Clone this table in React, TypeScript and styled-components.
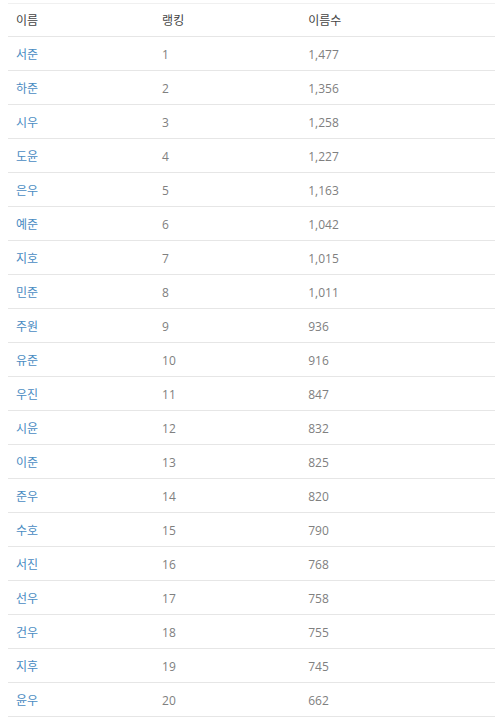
import React from "react";
import styled, { createGlobalStyle } from "styled-components";

const Global = createGlobalStyle`
  html, body { margin: 0; padding: 0; background: #fff; }
  body { font-family: "Open Sans", "Noto Sans CJK KR", sans-serif; }
`;

const Wrap = styled.div`
  padding: 3px 5px 0 8px;
`;

const Table = styled.table`
  width: 100%;
  border-collapse: collapse;
  font-size: 12px;
  line-height: 17px;
  border-top: 1px solid #f0f0f0;
`;

const Th = styled.th<{ $w: string }>`
  width: ${(p) => p.$w};
  text-align: left;
  font-weight: 400;
  color: #444;
  padding: 8px 8px 7px;
  border-bottom: 1px solid #e6e6e6;
`;

const Td = styled.td`
  padding: 9px 8px 7px;
  color: #808080;
  border-bottom: 1px solid #e6e6e6;
`;

const NameLink = styled.a`
  color: #4a8bc2;
  text-decoration: none;
`;

const rows: [string, number, string][] = [
  ["서준", 1, "1,477"],
  ["하준", 2, "1,356"],
  ["시우", 3, "1,258"],
  ["도윤", 4, "1,227"],
  ["은우", 5, "1,163"],
  ["예준", 6, "1,042"],
  ["지호", 7, "1,015"],
  ["민준", 8, "1,011"],
  ["주원", 9, "936"],
  ["유준", 10, "916"],
  ["우진", 11, "847"],
  ["시윤", 12, "832"],
  ["이준", 13, "825"],
  ["준우", 14, "820"],
  ["수호", 15, "790"],
  ["서진", 16, "768"],
  ["선우", 17, "758"],
  ["건우", 18, "755"],
  ["지후", 19, "745"],
  ["윤우", 20, "662"],
];

export default function App() {
  return (
    <Wrap>
      <Global />
      <Table>
        <thead>
          <tr>
            <Th $w="30%">이름</Th>
            <Th $w="30%">랭킹</Th>
            <Th $w="40%">이름수</Th>
          </tr>
        </thead>
        <tbody>
          {rows.map(([n, r, c]) => (
            <tr key={r}>
              <Td>
                <NameLink href="#">{n}</NameLink>
              </Td>
              <Td>{r}</Td>
              <Td>{c}</Td>
            </tr>
          ))}
        </tbody>
      </Table>
    </Wrap>
  );
}
